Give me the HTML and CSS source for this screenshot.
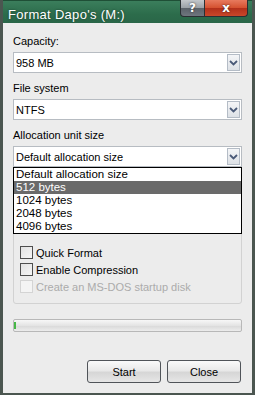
FILE: index.html
```html
<!DOCTYPE html>
<html lang="en">
<head>
    <meta charset="UTF-8">
    <meta name="viewport" content="width=device-width, initial-scale=1.0">
    <title>Format Dapo's (M:)</title>
    <link rel="stylesheet" href="styles.css">
</head>
<body>
    <div class="window">
        <!-- title bar -->
        <div class="titlebar">
            <span class="title">Format Dapo's (M:)</span>
            <div class="caption-buttons">
                <button class="cap-btn help">?</button>
                <button class="cap-btn close">x</button>
            </div>
        </div>

        <div class="content">
            <div class="row">
                <div class="label">Capacity:</div>
                <div class="select">
                    <span class="value">958 MB</span>
                    <span class="arrow"><svg width="9" height="6" viewBox="0 0 9 6"><polyline points="1,1 4.5,4.5 8,1" fill="none" stroke="#4a5a78" stroke-width="1.8"/></svg></span>
                </div>
            </div>

            <div class="row">
                <div class="label">File system</div>
                <div class="select">
                    <span class="value">NTFS</span>
                    <span class="arrow"><svg width="9" height="6" viewBox="0 0 9 6"><polyline points="1,1 4.5,4.5 8,1" fill="none" stroke="#4a5a78" stroke-width="1.8"/></svg></span>
                </div>
            </div>

            <div class="row">
                <div class="label">Allocation unit size</div>
                <div class="select open">
                    <span class="value">Default allocation size</span>
                    <span class="arrow"><svg width="9" height="6" viewBox="0 0 9 6"><polyline points="1,1 4.5,4.5 8,1" fill="none" stroke="#4a5a78" stroke-width="1.8"/></svg></span>
                    <!-- open dropdown -->
                    <ul class="dropdown">
                        <li>Default allocation size</li>
                        <li class="selected">512 bytes</li>
                        <li>1024 bytes</li>
                        <li>2048 bytes</li>
                        <li>4096 bytes</li>
                    </ul>
                </div>
            </div>

            <div class="group">
                <label class="check"><span class="box"></span>Quick Format</label>
                <label class="check"><span class="box"></span>Enable Compression</label>
                <label class="check disabled"><span class="box"></span>Create an MS-DOS startup disk</label>
            </div>

            <div class="progress"><div class="chunk"></div></div>

            <div class="buttons">
                <button class="btn">Start</button>
                <button class="btn">Close</button>
            </div>
        </div>
    </div>
</body>
</html>
```

FILE: styles.css
```css
/* base */
body {
    margin: 0;
    font-family: "Liberation Sans", Arial, sans-serif;
    font-size: 11px;
    color: #000;
    background: #ececec;
}

.window {
    width: 255px;
    height: 395px;
    box-sizing: border-box;
    border-left: 3px solid #4b5650;
    border-right: 3px solid #4b5650;
    border-bottom: 2px solid #4b5650;
    background: #ececec;
    display: flex;
    flex-direction: column;
}

/* title bar */
.titlebar {
    height: 23px;
    flex: none;
    display: flex;
    align-items: flex-start;
    padding: 0 4px 0 5px;
    background: linear-gradient(#3b7e5c, #2c6c4b 60%, #2a6648);
    border-top: 1px solid #1f4f36;
    box-sizing: border-box;
}
.title {
    color: #fff;
    font-size: 13px;
    letter-spacing: 0.3px;
    line-height: 13px;
    padding-top: 7px;
    text-shadow: 0 0 2px #1a3a2a;
}
.caption-buttons {
    margin-left: auto;
    display: flex;
    margin-top: -1px;
}
.cap-btn {
    height: 17px;
    border: 1px solid #2a2f33;
    border-top: none;
    color: #fff;
    font-family: "DejaVu Sans", sans-serif;
    font-weight: bold;
    font-size: 12px;
    line-height: 14px;
    padding: 0;
    text-shadow: 0 0 2px #222;
}
.cap-btn.help {
    width: 25px;
    border-radius: 0 0 0 4px;
    background: linear-gradient(#c3c7cb, #9aa0a6 50%, #5b626a 52%, #6f767e);
}
.cap-btn.close {
    width: 43px;
    border-left: none;
    border-radius: 0 0 4px 0;
    background: linear-gradient(#e77a5e, #d4502f 50%, #b3301a 52%, #c8472a);
}

/* form content */
.content {
    flex: 1;
    padding: 12px 10px 0;
    display: flex;
    flex-direction: column;
}
.row {
    margin-bottom: 9px;
}
.row:nth-child(3) {
    margin-bottom: 0;
}
.label {
    line-height: 13px;
    margin-bottom: 4px;
}
.select {
    position: relative;
    height: 21px;
    box-sizing: border-box;
    border: 1px solid #b7bcc2;
    background: #fff;
    display: flex;
    align-items: center;
    padding-left: 2px;
}
.select .value {
    flex: 1;
}
.arrow {
    width: 13px;
    height: 17px;
    margin-right: 1px;
    box-sizing: border-box;
    border: 1px solid #b4bcc6;
    background: linear-gradient(#f4f5f7, #dde1e6);
    display: flex;
    align-items: center;
    justify-content: center;
}

/* open list */
.dropdown {
    position: absolute;
    left: -1px;
    right: -1px;
    top: 20px;
    margin: 0;
    padding: 0;
    list-style: none;
    background: #fff;
    border: 1px solid #000;
    z-index: 2;
}
.dropdown li {
    height: 13px;
    line-height: 13px;
    padding-left: 2px;
    font-size: 11.5px;
}
.dropdown li.selected {
    background: #6a6a6a;
    color: #fff;
}

/* options group */
.group {
    margin-top: 10px;
    border: 1px solid #d2d2d2;
    border-radius: 3px;
    padding: 66px 6px 8px;
}
.check {
    display: flex;
    align-items: center;
    height: 17px;
    font-size: 11px;
}
.box {
    width: 13px;
    height: 13px;
    box-sizing: border-box;
    border: 1px solid #4e4e4e;
    background: linear-gradient(135deg, #e2e2e2, #f6f6f6);
    margin-right: 3px;
}
.check.disabled {
    color: #ababab;
}
.check.disabled .box {
    border-color: #d4d4d4;
    background: #f4f4f4;
}

/* progress */
.progress {
    margin-top: 15px;
    height: 13px;
    box-sizing: border-box;
    border: 1px solid #b8b8b8;
    border-radius: 2px;
    background: linear-gradient(#f7f7f7, #e4e4e4 50%, #dadada 55%, #ececec);
    padding: 2px 0;
}
.chunk {
    width: 2px;
    height: 100%;
    background: #46b846;
}

/* buttons */
.buttons {
    margin-top: 28px;
    display: flex;
    justify-content: flex-end;
    gap: 6px;
    padding-right: 1px;
}
.btn {
    width: 74px;
    height: 23px;
    border: 1px solid #505459;
    border-radius: 3px;
    background: linear-gradient(#fafafa, #e9e9e9 45%, #d6d6d6 55%, #e6e6e6);
    font-family: "Liberation Sans", Arial, sans-serif;
    font-size: 11px;
    color: #000;
    padding: 0;
}
```
